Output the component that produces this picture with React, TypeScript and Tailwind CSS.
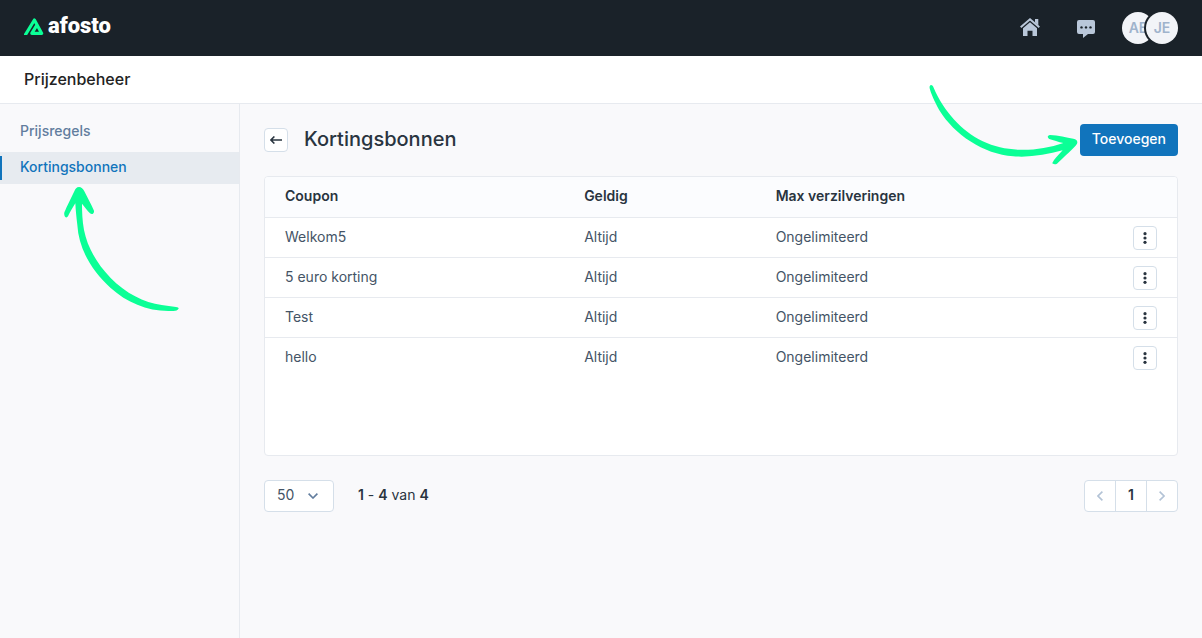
import { useState } from 'react'

type Coupon = {
  name: string
  valid: string
  maxRedemptions: string
}

const coupons: Coupon[] = [
  { name: 'Welkom5', valid: 'Altijd', maxRedemptions: 'Ongelimiteerd' },
  { name: '5 euro korting', valid: 'Altijd', maxRedemptions: 'Ongelimiteerd' },
  { name: 'Test', valid: 'Altijd', maxRedemptions: 'Ongelimiteerd' },
  { name: 'hello', valid: 'Altijd', maxRedemptions: 'Ongelimiteerd' },
]

function Logo() {
  return (
    <a href="#" className="flex items-center gap-1 pb-1 text-white">
      <svg viewBox="0 0 20 17" className="h-[17px] w-5" aria-hidden="true">
        <path
          d="M.2 18.8 10.4 2l7.200 13.300H7.800l4.600-7.400"
          fill="none"
          stroke="#0bff96"
          strokeWidth="3.2"
          strokeLinejoin="round"
        />
      </svg>
      <span className="font-['Roboto',sans-serif] text-[22px] leading-6 font-black">afosto</span>
    </a>
  )
}

function HomeIcon() {
  return (
    <svg viewBox="0 0 20 18" className="h-[18px] w-5" aria-hidden="true">
      <path d="M.7 9.3 10 1.3l9.3 8" fill="none" stroke="currentColor" strokeWidth="2" />
      <path d="M15 1h3.3v6.5L15 4.6Z" fill="currentColor" />
      <path d="M10 4.2 17 10.3V18h-4.5v-5.2h-5V18H3v-7.7Z" fill="currentColor" />
    </svg>
  )
}

function ChatIcon() {
  return (
    <svg viewBox="0 0 18 18" className="size-[18px]" aria-hidden="true">
      <path
        d="M2 0h14a2 2 0 0 1 2 2v10a2 2 0 0 1-2 2h-5l-5 4v-4H2a2 2 0 0 1-2-2V2a2 2 0 0 1 2-2Z"
        fill="currentColor"
      />
      <g fill="#1a2229">
        <circle cx="4.5" cy="7.4" r="1.2" />
        <circle cx="9" cy="7.4" r="1.2" />
        <circle cx="13.5" cy="7.4" r="1.2" />
      </g>
    </svg>
  )
}

function TopBar() {
  return (
    <header className="flex h-14 items-center justify-between bg-[#1a2229] px-6 text-[#b9c7d9]">
      <Logo />
      <div className="flex items-center">
        <button type="button" aria-label="Home" className="pb-0.5">
          <HomeIcon />
        </button>
        <button type="button" aria-label="Berichten" className="ml-9 pt-0.5 pl-px">
          <ChatIcon />
        </button>
        <div className="ml-[27px] flex text-sm font-semibold text-[#9fb3cc]">
          <span className="flex size-8 items-center justify-center rounded-full bg-[#f2f4f8]">AE</span>
          <span className="-ml-2 flex size-8 items-center justify-center rounded-full bg-[#f2f4f8] ring-2 ring-[#1a2229]">
            JE
          </span>
        </div>
      </div>
    </header>
  )
}

function Sidebar() {
  return (
    <nav className="w-60 shrink-0 border-r border-[#e7eaef] pt-3">
      <ul className="flex flex-col gap-1 text-sm font-medium">
        <li>
          <a href="#" className="flex h-8 items-center px-5 pb-0.5 text-[#627d9e]">
            Prijsregels
          </a>
        </li>
        <li className="relative">
          <a href="#" className="flex h-8 items-center bg-[#e7ebf0] text-[#1174bc]">
            <span className="h-6 w-0.5 bg-[#1174bc]" />
            <span className="px-[18px] pb-0.5">Kortingsbonnen</span>
          </a>
          {/* Pointer to the active item */}
          <svg
            viewBox="60 42 366 390"
            className="pointer-events-none absolute top-8 left-[60px] h-[130px] w-[122px] fill-[#0bff96]"
            aria-hidden="true"
          >
            <path d="M117 51C124 51 129 56 133 64C142 82 152 100 162 122C163 131 156 135 150 130C142 122 134 111 126 101C126 125 127 150 132 180C142 230 168 278 212 324C257 370 312 398 365 405L408 411C416 412 419 415 413 419C408 423 400 424 385 423C320 423 260 397 212 354C153 300 116 235 112 165C109 140 107 120 106 100C98 113 90 126 84 139C80 145 74 142 73 134C71 127 76 122 79 113L103 64C106 56 110 51 117 51Z" />
          </svg>
        </li>
      </ul>
    </nav>
  )
}

function CouponTable() {
  return (
    <div className="min-h-[280px] overflow-hidden rounded border border-[#e7eaef] bg-white">
      <table className="w-full table-fixed text-left text-sm">
        <thead>
          <tr className="h-10 border-b border-[#e7eaef] bg-[#fbfcfe] text-[#29343f]">
            <th className="w-[32.8%] px-5 pb-px font-semibold">Coupon</th>
            <th className="w-[21%] px-5 pb-px font-semibold">Geldig</th>
            <th className="px-5 pb-px font-semibold">Max verzilveringen</th>
            <th className="w-16" />
          </tr>
        </thead>
        <tbody className="text-[#445466]">
          {coupons.map((coupon) => (
            <tr key={coupon.name} className="h-10 border-b border-[#e7eaef] last:border-b-0">
              <td className="px-5">{coupon.name}</td>
              <td className="px-5">{coupon.valid}</td>
              <td className="px-5">{coupon.maxRedemptions}</td>
              <td className="px-5 pt-0.5">
                <button
                  type="button"
                  aria-label={`Acties voor ${coupon.name}`}
                  className="flex size-6 items-center justify-center rounded border border-[#d5dfe9] bg-white text-[#29343f]"
                >
                  <svg viewBox="0 0 4 12" className="h-3 w-1 fill-current" aria-hidden="true">
                    <circle cx="2" cy="1.7" r="1.6" />
                    <circle cx="2" cy="6" r="1.6" />
                    <circle cx="2" cy="10.3" r="1.6" />
                  </svg>
                </button>
              </td>
            </tr>
          ))}
        </tbody>
      </table>
    </div>
  )
}

function Pagination() {
  const [pageSize, setPageSize] = useState('50')

  return (
    <div className="mt-6 flex items-center justify-between text-sm text-[#29343f]">
      <div className="flex items-center gap-6">
        <div className="relative">
          <select
            aria-label="Aantal per pagina"
            value={pageSize}
            onChange={(e) => setPageSize(e.target.value)}
            className="h-8 w-[70px] appearance-none rounded border border-[#d5dfe9] bg-white pb-0.5 pl-3 text-[#445466]"
          >
            <option>25</option>
            <option>50</option>
            <option>100</option>
          </select>
          <svg
            viewBox="0 0 10 6"
            className="pointer-events-none absolute top-[13px] right-4 h-1.5 w-2.5 fill-none stroke-[#627d9e] stroke-[1.6]"
            aria-hidden="true"
          >
            <path d="M.6.6 5 5 9.4.6" />
          </svg>
        </div>
        <p className="pb-0.5">
          <b className="font-semibold">1</b> - <b className="font-semibold">4</b> van <b className="font-semibold">4</b>
        </p>
      </div>

      <div className="flex h-8 divide-x divide-[#d5dfe9] rounded border border-[#d5dfe9] bg-white text-[#b3c3d6]">
        <button type="button" aria-label="Vorige" className="flex w-[31px] items-center justify-center">
          <svg viewBox="0 0 6 10" className="h-2.5 w-1.5 fill-none stroke-current stroke-[1.6]" aria-hidden="true">
            <path d="M5.4.6 1 5l4.4 4.4" />
          </svg>
        </button>
        <button type="button" className="w-[31px] pb-0.5 font-semibold">
          <span className="text-[#29343f]">1</span>
        </button>
        <button type="button" aria-label="Volgende" className="flex w-[30px] items-center justify-center">
          <svg viewBox="0 0 6 10" className="h-2.5 w-1.5 fill-none stroke-current stroke-[1.6]" aria-hidden="true">
            <path d="M.6.6 5 5 .6 9.4" />
          </svg>
        </button>
      </div>
    </div>
  )
}

export default function App() {
  return (
    <div className="flex min-h-screen flex-col bg-[#f9f9fb] font-['Inter',sans-serif]">
      <TopBar />
      <div className="flex h-12 items-center border-b border-[#e7eaef] bg-white px-6 pb-0.5 text-base font-medium text-[#222]">
        Prijzenbeheer
      </div>

      <div className="flex flex-1">
        <Sidebar />
        <main className="min-w-0 flex-1 px-6 pt-5">
          <div className="mb-5 flex items-center">
            <button
              type="button"
              aria-label="Terug"
              className="flex size-6 items-center justify-center rounded border border-[#d5dfe9] bg-white text-[#29343f]"
            >
              <svg viewBox="0 0 12 8" className="h-2 w-3 fill-none stroke-current stroke-[1.6]" aria-hidden="true">
                <path d="M12 4H1.2M4.4.5.9 4l3.5 3.5" />
              </svg>
            </button>
            <h1 className="ml-4 pb-0.5 text-xl font-medium text-[#29343f]">Kortingsbonnen</h1>
            <div className="relative ml-auto">
              {/* Pointer to the add button */}
              <svg
                viewBox="84 42 450 246"
                className="pointer-events-none absolute -top-10 right-full mr-0.5 h-[82px] w-[150px] fill-[#0bff96]"
                aria-hidden="true"
              >
                <path d="M93 45C97 45 99 48 101 53C108 70 117 86 129 106C168 166 228 216 300 232C360 246 430 240 490 219C475 216 460 211 448 207C441 203 442 196 450 195C475 196 500 203 520 206C530 208 534 214 531 221C525 232 490 262 471 281C465 284 457 282 457 279C462 268 475 255 488 241C440 254 390 263 340 259C250 253 163 194 118 121C102 92 92 68 89 55C88 49 90 45 93 45Z" />
              </svg>
              <button type="button" className="h-8 rounded bg-[#1174bc] px-3 pb-0.5 text-sm font-medium text-white">
                Toevoegen
              </button>
            </div>
          </div>

          <CouponTable />
          <Pagination />
        </main>
      </div>
    </div>
  )
}
